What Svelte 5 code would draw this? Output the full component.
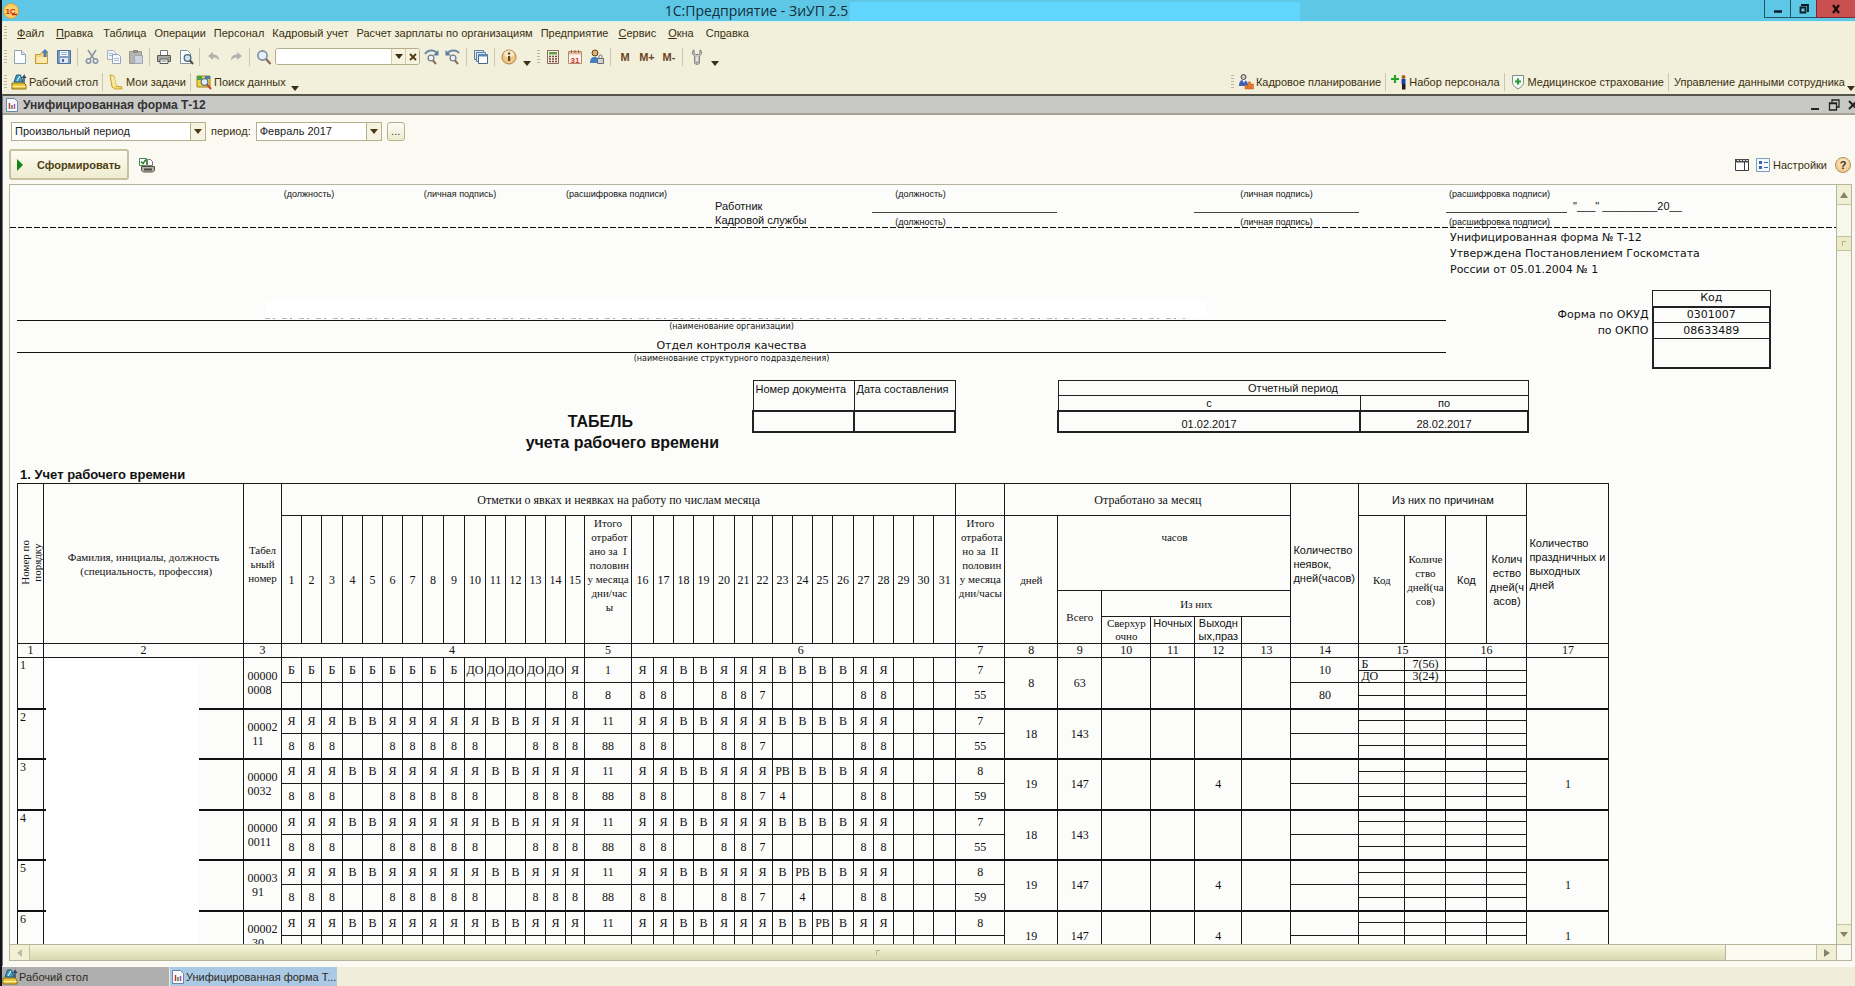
<script>
  const menu = [
    ['Ф', 'айл'], ['П', 'равка'], ['', 'Таблица'], ['', 'Операции'], ['', 'Персонал'],
    ['', 'Кадровый учет'], ['', 'Расчет зарплаты по организациям'], ['', 'Предприятие'],
    ['С', 'ервис'], ['О', 'кна'], ['', 'Сп', 'р', 'авка']
  ];

  const tools = [
    ['new', 'Новый'], ['open', 'Открыть'], ['save', 'Сохранить'], null,
    ['cut', 'Вырезать'], ['copy', 'Копировать'], ['paste', 'Вставить'], null,
    ['print', 'Печать'], ['preview', 'Просмотр'], null,
    ['undo', 'Отменить'], ['redo', 'Вернуть'], null,
    ['find', 'Найти']
  ];

  const firstDays = Array.from({ length: 15 }, (_, i) => i + 1);
  const secondDays = Array.from({ length: 16 }, (_, i) => i + 16);

  const cols = [
    26, 200, 38,
    20, 20, 21, 20, 20, 20, 20, 21, 21, 21, 20, 20, 20, 20, 19,
    47, 22, 20, 20, 20, 21, 18, 20, 20, 20, 20, 21, 20, 20, 20, 20, 22, 49,
    53, 44, 49, 44, 47, 49, 68, 46, 41, 41, 40, 82
  ];

  const usual = 'Я Я Я В В Я Я Я Я Я В В Я Я Я'.split(' ');
  const sick = 'Б Б Б Б Б Б Б Б Б ДО ДО ДО ДО ДО Я'.split(' ');

  function secondHalf(extra) {
    const codes = 'Я Я В В Я Я Я В В В В Я Я'.split(' ').concat(['', '', '']);
    const hours = ['8', '8', '', '', '8', '8', '7', '', '', '', '', '8', '8', '', '', ''];
    if (extra) {
      codes[extra - 16] = 'РВ';
      hours[extra - 16] = '4';
    }
    return { codes, hours };
  }

  function person(n, id, extra, isSick = false) {
    const first = isSick ? sick : usual;
    return {
      n, id, first,
      firstHours: first.map((c) => (c === 'Я' ? '8' : '')),
      t1: isSick ? ['1', '8'] : ['11', '88'],
      second: secondHalf(extra),
      t2: extra ? ['8', '59'] : ['7', '55'],
      days: isSick ? '8' : extra ? '19' : '18',
      total: isSick ? '63' : extra ? '147' : '143',
      holiday: extra ? '4' : '',
      holidays: extra ? '1' : '',
      absence: isSick ? ['10', '80'] : ['', ''],
      reasons: isSick ? [['Б', '7(56)'], ['ДО', '3(24)'], ['', ''], ['', '']] : [['', ''], ['', ''], ['', ''], ['', '']]
    };
  }

  const people = [
    person(1, '00000\n0008  ', 0, true),
    person(2, '00002\n11   ', 0),
    person(3, '00000\n0032  ', 23),
    person(4, '00000\n0011  ', 0),
    person(5, '00003\n91   ', 24),
    person(6, '00002\n30   ', 25)
  ];

  let period = $state('Произвольный период');
  let month = $state('Февраль 2017');
  let query = $state('');
</script>

{#snippet icon(name)}
  <svg class="ico" viewBox="0 0 16 16" width="16" height="16" aria-hidden="true">
    {#if name === 'new'}
      <path d="M2.5 1.5h7l4 4v9h-11z" fill="#fdfeff" stroke="#8fa3b5" />
      <path d="M9.500 1.500v4h4" fill="#d8e6f2" stroke="#8fa3b5" />
    {:else if name === 'open'}
      <path d="M1.500 5.500h5l1-2h6v11h-12z" fill="#f6d77c" stroke="#c29a3c" />
      <path d="M3 8h10v6H3z" fill="#fbe9ae" />
      <path d="M11 0l3.500 3.500h-2V8h-3V3.500h-2z" fill="#4f7fb5" />
    {:else if name === 'save'}
      <path d="M1.500 1.500h13v13h-13z" fill="#7e9cc4" stroke="#4e6c96" />
      <path d="M4 2h8v5H4z" fill="#f2f7fc" />
      <path d="M5 3.500h6M5 5.500h6" stroke="#9db3cd" />
      <path d="M4 9h8v5H4z" fill="#dfe7f0" />
      <path d="M6 10h2v3H6z" fill="#4e6c96" />
    {:else if name === 'cut'}
      <path d="M4 1l6 9M12 1L6 10" stroke="#8b95a3" stroke-width="1.600" fill="none" />
      <circle cx="4.500" cy="12" r="2.200" fill="none" stroke="#8593ab" stroke-width="1.500" />
      <circle cx="11.500" cy="12" r="2.200" fill="none" stroke="#8593ab" stroke-width="1.500" />
    {:else if name === 'copy'}
      <path d="M1.500 1.500h6l2 2v7h-8z" fill="#eef3f8" stroke="#a3b2c4" />
      <path d="M6.500 5.500h6l2 2v7h-8z" fill="#f6f9fc" stroke="#93a5bb" />
      <path d="M8 9.500h5M8 11.500h5M3 4.500h4M3 6.500h3" stroke="#a9bbd0" />
    {:else if name === 'paste'}
      <path d="M1.500 2.500h12v12h-12z" fill="#b6b6b0" stroke="#97978f" />
      <path d="M5 1h5v3H5z" fill="#8f8f8a" />
      <path d="M6.500 6.500h8v8h-8z" fill="#cdd3da" stroke="#9ea8b4" />
    {:else if name === 'print'}
      <path d="M4.500 1.500h7v5h-7z" fill="#fff" stroke="#77777a" />
      <path d="M1.500 6.500h13v6h-13z" fill="#a9a9a6" stroke="#5b5b59" />
      <path d="M4 10h8v4.500H4z" fill="#f4f4ef" stroke="#5b5b59" />
      <path d="M5.500 12h5" stroke="#888" />
      <path d="M12 8h1.500v1H12z" fill="#4fa13c" />
    {:else if name === 'preview'}
      <path d="M2.500 1.500h7l3 3v10h-10z" fill="#fdfeff" stroke="#7f93a8" />
      <circle cx="9.500" cy="9" r="3.300" fill="#cfe3f3" stroke="#4f6478" stroke-width="1.300" />
      <path d="M12 11.500l3 3.500" stroke="#5a4a3a" stroke-width="2" />
    {:else if name === 'undo'}
      <path d="M2 7l5-4v2.500c4 0 6 2 6 6-1.500-2-3-3-6-3V11z" fill="#b0b3ac" />
    {:else if name === 'redo'}
      <path d="M14 7L9 3v2.500c-4 0-6 2-6 6 1.500-2 3-3 6-3V11z" fill="#b0b3ac" />
    {:else if name === 'find'}
      <circle cx="6.500" cy="6.500" r="4.600" fill="#e4f0fa" stroke="#7d8da0" stroke-width="1.600" />
      <path d="M10 10l4.500 5" stroke="#8b6f5a" stroke-width="2.400" />
    {:else if name === 'findnext' || name === 'findprev'}
      <path d="M2 5c2-4 9-5 12-1" fill="none" stroke="#6c8ca6" stroke-width="2" />
      <path d={name === 'findnext' ? 'M15.500 1v5.500H10z' : 'M.5 1v5.500H6z'} fill="#5c7e9b" />
      <circle cx="8" cy="9" r="2.900" fill="#eaf3fa" stroke="#7a7f88" stroke-width="1.300" />
      <path d="M10 11.500l3 3.500" stroke="#8b6f5a" stroke-width="2" />
    {:else if name === 'windows'}
      <path d="M1.500 1.500h9v9h-9z" fill="#dfe9f3" stroke="#5a7fa5" />
      <path d="M3.500 3.500h9v9h-9z" fill="#dfe9f3" stroke="#5a7fa5" />
      <path d="M5.500 5.500h9v9h-9z" fill="#fff" stroke="#43678d" />
      <path d="M5 5h10v2.500H5z" fill="#5a87b5" />
    {:else if name === 'info'}
      <circle cx="8" cy="8" r="7" fill="#f1c887" stroke="#a98246" />
      <ellipse cx="8" cy="5" rx="5" ry="3.500" fill="#fbe8c6" />
      <path d="M7 7h2.200v5H7zM7 3.500h2.200v2H7z" fill="#5a4722" />
    {:else if name === 'calc'}
      <path d="M2.500 1.500h11v13h-11z" fill="#f4efe0" stroke="#8b6b58" />
      <path d="M4 3h8v2.500H4z" fill="#5fa047" />
      <path d="M4 7.500h2M7 7.500h2M10 7.500h2M4 10h2M7 10h2M10 10h2M4 12.500h2M7 12.500h2M10 12.500h2" stroke="#7a4a3a" stroke-width="1.400" />
    {:else if name === 'calendar'}
      <path d="M1.500 2.500h13v12h-13z" fill="#fff4ea" stroke="#b98671" />
      <path d="M2 3h12v2.500H2z" fill="#e8b9a2" />
      <path d="M4.500 1v3M8 1v3M11.500 1v3" stroke="#8d6a58" />
      <text x="8" y="13.500" text-anchor="middle" class="day31">31</text>
    {:else if name === 'userlock'}
      <circle cx="6" cy="4" r="3" fill="#e0b070" stroke="#5f4020" />
      <path d="M1 14c0-5 2-6 5-6s4 2 4 6z" fill="#3f7fc4" />
      <path d="M8.500 9.500h6v5h-6z" fill="#cfd3d8" stroke="#666c74" />
      <path d="M10 9V7.500a1.500 1.500 0 013 0V9" fill="none" stroke="#666c74" />
    {:else if name === 'wrench'}
      <path d="M5 .8C2.800 2 2.800 5.500 5.600 7v7c0 1.800 4.800 1.800 4.800 0V7c2.800-1.500 2.800-5 .6-6.200v3.400L9.500 5.500h-3L5 4.200z" fill="#cbcbc8" stroke="#7c7c78" />
      <path d="M8 8v5" stroke="#fff" />
      <circle cx="8" cy="13.200" r=".8" fill="#6c6c68" />
    {:else if name === 'desk'}
      <path d="M3 8L5.500 1h4L12 8z" fill="#3e9dc0" stroke="#22566e" />
      <path d="M6 7l3-5" stroke="#fff" />
      <path d="M13 12V2l-1.500 2M13 2l2 2" stroke="#27466e" stroke-width="1.400" fill="none" />
      <path d="M1 9h12l2 2v4H1z" fill="#ecc63f" stroke="#8d6f12" />
      <path d="M1.500 12.500h13" stroke="#fff1a0" />
    {:else if name === 'note'}
      <path d="M2 1l4 1 2 10 6 1v2H7L4 13z" fill="#f4d568" stroke="#c9a537" />
      <path d="M3 2l3 .500 2 9.500-3 .500z" fill="#fbeba0" />
    {:else if name === 'search'}
      <path d="M1 2h13v11H1z" fill="#f6d33a" stroke="#9c8320" />
      <path d="M1 2h5v4H1z" fill="#4aa04a" />
      <path d="M9 2h5v3H9z" fill="#3d78c0" />
      <circle cx="8.500" cy="8" r="3.300" fill="#e2f1fb" stroke="#5d7a90" stroke-width="1.300" />
      <path d="M11 10.500l4 4.500" stroke="#c24b2c" stroke-width="2" />
    {:else if name === 'plan'}
      <circle cx="5.500" cy="3" r="2.500" fill="#e8c49a" stroke="#37497f" />
      <path d="M1 12c0-5 2-6 4.500-6S10 8 10 12z" fill="#3c62b8" />
      <path d="M4.500 6L6 9l1.500-3z" fill="#fff" />
      <path d="M7 15V11h2.500v4zM10 15V8h2.500v7zM13 15V10h2.500v5z" fill="#f0812c" stroke="#b84e12" stroke-width=".500" />
    {:else if name === 'hire'}
      <path d="M4 1v8M0 5h8" stroke="#25a325" stroke-width="2.200" />
      <circle cx="12.500" cy="3" r="2" fill="#a3622a" />
      <path d="M10.500 5h4v5h-4z" fill="#1c3fb2" />
      <path d="M11 10h3.500v5.500H11z" fill="#2c1a14" />
    {:else if name === 'shield'}
      <path d="M2.500 1.500h11v7c0 3-3 5-5.500 6.500C5.500 13.500 2.500 11.500 2.500 8.500z" fill="#f6faf4" stroke="#7f8f8a" />
      <path d="M8 4.500v6M5 7.500h6" stroke="#2c9a3a" stroke-width="2.200" />
    {:else if name === 'report'}
      <path d="M2.500 1.500h8l3 3v10h-11z" fill="#f6fafd" stroke="#6b87a3" />
      <path d="M5.500 12V6" stroke="#c0392b" stroke-width="1.500" />
      <path d="M8 12V8" stroke="#4a8a3a" stroke-width="1.500" />
      <path d="M10.500 12V7" stroke="#b04ab0" stroke-width="1.500" />
    {:else if name === 'printcheck'}
      <path d="M.5 1.500h7v7h-7z" fill="#fff" stroke="#4e8a4e" />
      <path d="M2 4.500l2 2 3-4" stroke="#1f8a2a" stroke-width="1.500" fill="none" />
      <path d="M8.500 2.500h3l2 2v4h-5z" fill="#fff" stroke="#777" />
      <path d="M2.500 9.500h13v4l-2 1.500h-9l-2-1.500z" fill="#b5b3a8" stroke="#55544c" />
      <path d="M5 11.500h8v2H5z" fill="#49483f" />
    {:else if name === 'columns'}
      <path d="M1.500 2.500h13v11h-13z" fill="#fff" stroke="#3d3d3d" />
      <path d="M1 2h14v3.500H1z" fill="#4b4b4b" />
      <path d="M3 3.500h2M6 3.500h2M9 3.500h2M12 3.500h2" stroke="#ddd" />
      <path d="M10.500 5v8" stroke="#3d3d3d" />
    {:else if name === 'list'}
      <path d="M1.500 1.500h13v13h-13z" fill="#f3f8fd" stroke="#7b9cc4" />
      <path d="M4 4h3v3H4zM4 9h3v3H4z" fill="#3a69a8" />
      <path d="M9 5.500h4M9 10.500h4" stroke="#3a69a8" />
    {/if}
  </svg>
{/snippet}

{#snippet tool(name, label)}
  <button class="tool" aria-label={label}>{@render icon(name)}</button>
{/snippet}

<div class="window">
  <header class="titlebar">
    <svg class="logo" viewBox="0 0 16 16" width="16" height="16" aria-hidden="true">
      <circle cx="8" cy="8" r="7.500" fill="#f9d36a" stroke="#d99a3a" />
      <text x="7.500" y="11" text-anchor="middle" class="logo-text">1С</text>
      <path d="M9 11.500h5" stroke="#c8281c" stroke-width="1.500" />
    </svg>
    <h1>1С:Предприятие - ЗиУП 2.5</h1>
    <span class="veil"></span>
    <div class="winbtns">
      <button aria-label="Свернуть"><svg viewBox="0 0 10 10" width="10" height="10"><path d="M1 7.500h8" stroke="#0b1c24" stroke-width="2.500" /></svg></button>
      <button aria-label="Восстановить"><svg viewBox="0 0 10 10" width="10" height="10"><path d="M3 2V1h6v6H8M1.500 3.500h5v5h-5z" fill="none" stroke="#0b1c24" stroke-width="1.800" /></svg></button>
      <button class="close" aria-label="Закрыть"><svg viewBox="0 0 10 10" width="10" height="10"><path d="M2 1l6 8M8 1L2 9" stroke="#1b0b0b" stroke-width="2.200" /></svg></button>
    </div>
  </header>

  <nav class="bar menu">
    <span class="grip"></span>
    {#each menu as m}
      <button class:key={m[0] || m[2]}><u>{m[0]}</u>{m[1]}{#if m[2]}<u>{m[2]}</u>{m[3]}{/if}</button>
    {/each}
  </nav>

  <div class="bar tools">
    <span class="grip"></span>
    {#each tools as t}
      {#if t}{@render tool(t[0], t[1])}{:else}<span class="sep"></span>{/if}
    {/each}
    <div class="combo">
      <input aria-label="Поиск" bind:value={query} />
      <button aria-label="Список"><span class="tri"></span></button>
      <button aria-label="Очистить"><svg viewBox="0 0 8 8" width="8" height="8"><path d="M1 1l6 6M7 1L1 7" stroke="#4a3b12" stroke-width="1.800" /></svg></button>
    </div>
    {@render tool('findnext', 'Найти следующий')}
    {@render tool('findprev', 'Найти предыдущий')}
    <span class="sep"></span>
    {@render tool('windows', 'Окна')}
    <span class="sep"></span>
    {@render tool('info', 'О программе')}
    <button class="more" aria-label="Еще"><span class="tri"></span></button>
    <span class="grip mid"></span>
    {@render tool('calc', 'Калькулятор')}
    {@render tool('calendar', 'Календарь')}
    {@render tool('userlock', 'Пользователи')}
    <span class="sep"></span>
    <button class="tool mem">M</button>
    <button class="tool mem">M+</button>
    <button class="tool mem">M-</button>
    <span class="sep"></span>
    {@render tool('wrench', 'Настройка')}
    <button class="more" aria-label="Еще"><span class="tri"></span></button>
  </div>

  <div class="bar panels">
    <span class="grip"></span>
    <button class="panel">{@render icon('desk')}Рабочий стол</button>
    <span class="sep"></span>
    <button class="panel">{@render icon('note')}Мои задачи</button>
    <span class="sep"></span>
    <button class="panel">{@render icon('search')}Поиск данных</button>
    <button class="more" aria-label="Еще"><span class="tri"></span></button>
    <span class="grow"></span>
    <span class="grip"></span>
    <button class="panel">{@render icon('plan')}Кадровое планирование</button>
    <span class="sep"></span>
    <button class="panel">{@render icon('hire')}Набор персонала</button>
    <span class="sep"></span>
    <button class="panel">{@render icon('shield')}Медицинское страхование</button>
    <span class="sep"></span>
    <button class="panel">Управление данными сотрудника</button>
    <button class="more edge" aria-label="Еще"><span class="tri"></span></button>
  </div>

  <main class="mdi">
    <div class="caption">
      {@render icon('report')}
      <h2>Унифицированная форма Т-12</h2>
      <div class="mdibtns">
        <button aria-label="Свернуть"><svg viewBox="0 0 12 12" width="12" height="12"><path d="M2 10h8" stroke="#222" stroke-width="2" /></svg></button>
        <button aria-label="Восстановить"><svg viewBox="0 0 12 12" width="12" height="12"><path d="M4 3V1h7v7H9M1.500 4h7v7h-7zM1 4.500h8" fill="none" stroke="#222" stroke-width="1.300" /></svg></button>
        <button aria-label="Закрыть"><svg viewBox="0 0 12 12" width="12" height="12"><path d="M2 2l8 8M10 2l-8 8" stroke="#222" stroke-width="2" /></svg></button>
      </div>
    </div>

    <div class="filters">
      <span class="select wide">
        <select aria-label="Вид периода" bind:value={period}>
          <option>Произвольный период</option>
        </select>
      </span>
      <label for="month">период:</label>
      <span class="select">
        <select id="month" bind:value={month}>
          <option>Февраль 2017</option>
        </select>
      </span>
      <button class="dots">...</button>
    </div>

    <div class="actions">
      <button class="run"><span class="play"></span>Сформировать</button>
      <button class="tool" aria-label="Печать">{@render icon('printcheck')}</button>
      <span class="grow"></span>
      <button class="tool" aria-label="Колонки">{@render icon('columns')}</button>
      <button class="panel">{@render icon('list')}Настройки</button>
      <button class="help">?</button>
    </div>

    <section class="viewer">
      <div class="sheet">
        <div class="signs">
          <span class="s1">(должность)</span>
          <span class="s3">(личная подпись)</span>
          <span class="s4">(расшифровка подписи)</span>
          <span class="s6 post">(должность)</span>
          <span class="s8">(личная подпись)</span>
          <span class="s10 name">(расшифровка подписи)</span>
        </div>
        <div class="signs lines">
          <span class="s5 who">Работник</span>
          <span class="s6 line"></span>
          <span class="s8 line"></span>
          <span class="s10 line"></span>
          <span class="s11 date">"___" _________20__</span>
        </div>
        <div class="signs">
          <span class="s5 who">Кадровой службы</span>
          <span class="s6 post">(должность)</span>
          <span class="s8">(личная подпись)</span>
          <span class="s10 name">(расшифровка подписи)</span>
        </div>
        <div class="cutline"></div>

        <div class="head">
          <div class="org">
            <div class="blank"></div>
            <small>(наименование организации)</small>
            <p>Отдел контроля качества</p>
            <small>(наименование структурного подразделения)</small>
          </div>
          <div class="legal">
            <p>Унифицированная форма № Т-12</p>
            <p>Утверждена Постановлением Госкомстата</p>
            <p>России от 05.01.2004 № 1</p>
            <table class="codes">
              <tbody>
                <tr class="c1"><th></th><td>Код</td></tr>
                <tr class="c2"><th>Форма по ОКУД</th><td>0301007</td></tr>
                <tr class="c3"><th>по ОКПО</th><td>08633489</td></tr>
                <tr class="c4"><th></th><td></td></tr>
              </tbody>
            </table>
          </div>
        </div>

        <div class="titleblock">
          <h3><span class="t1">ТАБЕЛЬ</span><span>учета рабочего времени</span></h3>
          <table class="boxes doc">
            <tbody>
              <tr class="tall"><td>Номер документа</td><td>Дата составления</td></tr>
              <tr class="strong"><td></td><td></td></tr>
            </tbody>
          </table>
          <table class="boxes span">
            <colgroup><col class="from" /><col class="to" /></colgroup>
            <tbody>
              <tr><td colspan="2">Отчетный период</td></tr>
              <tr><td>с</td><td>по</td></tr>
              <tr class="strong"><td>01.02.2017</td><td>28.02.2017</td></tr>
            </tbody>
          </table>
        </div>

        <h4>1. Учет рабочего времени</h4>
        <div class="gridwrap">
          <table class="grid">
            <colgroup>
              {#each cols as w}<col style="width:{w}px" />{/each}
            </colgroup>
            <thead>
              <tr class="h1">
                <th rowspan="4"><span class="vert">Номер по{'\n'}порядку</span></th>
                <th rowspan="4" class="small">Фамилия, инициалы, должность{'\n'}  (специальность, профессия)</th>
                <th rowspan="4" class="small">Табел{'\n'}ьный{'\n'}номер</th>
                <th colspan="32">Отметки о явках и неявках на работу по числам месяца</th>
                <th></th>
                <th colspan="6">Отработано за месяц</th>
                <th rowspan="4" class="sans left">Количество{'\n'}неявок,{'\n'}дней(часов)</th>
                <th colspan="4" class="sans">Из них по причинам</th>
                <th rowspan="4" class="sans left">Количество{'\n'}праздничных и{'\n'}выходных{'\n'}дней</th>
              </tr>
              <tr class="h2">
                {#each firstDays as d}<th rowspan="3">{d}</th>{/each}
                <th rowspan="3" class="small top">Итого{'\n'} отработ{'\n'}ано за  I{'\n'} половин{'\n'}у месяца{'\n'} дни/час{'\n'} ы</th>
                {#each secondDays as d}<th rowspan="3">{d}</th>{/each}
                <th rowspan="3" class="small top">Итого{'\n'} отработа{'\n'}но за  II{'\n'} половин{'\n'}у месяца{'\n'}дни/часы</th>
                <th rowspan="3" class="small">дней</th>
                <th colspan="5" class="small top hours">часов</th>
                <th rowspan="3" class="small">Код</th>
                <th rowspan="3" class="small">Количе{'\n'}ство{'\n'}дней(ча{'\n'}сов)</th>
                <th rowspan="3" class="sans">Код</th>
                <th rowspan="3" class="sans">Колич{'\n'}ество{'\n'}дней(ч{'\n'}асов)</th>
              </tr>
              <tr class="h3">
                <th rowspan="2" class="small">Всего</th>
                <th colspan="4" class="small">Из них</th>
              </tr>
              <tr class="h4">
                <th class="small">Сверхур{'\n'}очно</th>
                <th class="sans top">Ночных</th>
                <th class="sans">Выходн{'\n'}ых,праз</th>
                <th></th>
              </tr>
              <tr class="h5">
                <th>1</th><th>2</th><th>3</th><th colspan="15" class="n4">4</th><th>5</th><th colspan="16" class="n6">6</th>
                <th>7</th><th>8</th><th>9</th><th>10</th><th>11</th><th>12</th><th>13</th><th>14</th>
                <th colspan="2">15</th><th colspan="2">16</th><th>17</th>
              </tr>
            </thead>
            {#each people as p}
              <tbody>
                {#each p.reasons as r, i}
                  <tr>
                    {#if i === 0}
                      <td rowspan="4" class="num">{p.n}</td>
                      <td rowspan="4"></td>
                      <td rowspan="4">{p.id}</td>
                    {/if}
                    {#if i === 0}
                      {#each p.first as c}<td rowspan="2">{c}</td>{/each}
                      <td rowspan="2">{p.t1[0]}</td>
                      {#each p.second.codes as c}<td rowspan="2">{c}</td>{/each}
                      <td rowspan="2">{p.t2[0]}</td>
                      <td rowspan="4">{p.days}</td>
                      <td rowspan="4">{p.total}</td>
                      <td rowspan="4"></td>
                      <td rowspan="4"></td>
                      <td rowspan="4">{p.holiday}</td>
                      <td rowspan="4"></td>
                      <td rowspan="2">{p.absence[0]}</td>
                    {:else if i === 2}
                      {#each p.firstHours as c}<td rowspan="2">{c}</td>{/each}
                      <td rowspan="2">{p.t1[1]}</td>
                      {#each p.second.hours as c}<td rowspan="2">{c}</td>{/each}
                      <td rowspan="2">{p.t2[1]}</td>
                      <td rowspan="2">{p.absence[1]}</td>
                    {/if}
                    <td class="reason code">{r[0]}</td>
                    <td class="reason">{r[1]}</td>
                    <td></td>
                    <td></td>
                    {#if i === 0}<td rowspan="4">{p.holidays}</td>{/if}
                  </tr>
                {/each}
              </tbody>
            {/each}
          </table>
          <div class="mask"></div>
        </div>
      </div>

      <div class="vscroll">
        <button aria-label="Вверх"><span class="tri up"></span></button>
        <span class="vthumb"><i class="mark"></i></span>
        <span class="grow"></span>
        <button aria-label="Вниз"><span class="tri"></span></button>
      </div>
      <div class="hscroll">
        <button aria-label="Влево"><span class="tri lt"></span></button>
        <span class="hthumb"><i class="mark"></i></span>
        <span class="htrack"></span>
        <button aria-label="Вправо"><span class="tri rt"></span></button>
      </div>
      <div class="corner"></div>
    </section>
  </main>

  <footer class="tabs">
    <button>{@render icon('desk')}Рабочий стол</button>
    <button class="on">{@render icon('report')}Унифицированная форма Т...</button>
  </footer>
</div>

<style>
  :global(body) { margin: 0; background: #f2f0da; }
  .window {
    box-sizing: border-box;
    height: 100vh;
    display: flex;
    flex-direction: column;
    overflow: hidden;
    border-left: 2px solid #14141c;
    background: #f2f0da;
    color: #3b2f10;
    font: 11px/14px "Liberation Sans", Arial, sans-serif;
  }
  button, input, select { font: inherit; color: inherit; margin: 0; }
  button { padding: 0; border: 0; background: none; white-space: nowrap; }
  h1, h2, h3, h4, p { margin: 0; }
  .grow { flex: 1; }
  .ico { display: block; flex: none; }

  .titlebar {
    height: 22px;
    flex: none;
    display: grid;
    grid-template-columns: 1fr auto 1fr;
    align-items: center;
    position: relative;
    background: #5fc7e6;
    border-bottom: 1px solid #d9f0ee;
    box-sizing: border-box;
  }
  .logo { margin-left: 1px; }
  .logo-text { font: bold 8px "Liberation Sans", Arial, sans-serif; fill: #c8281c; }
  h1 {
    font: 14px/20px "Open Sans", "Noto Sans", sans-serif;
    color: #12303c;
    grid-column: 2;
    padding-right: 344px;
  }
  .veil { position: absolute; left: 848px; top: 2px; bottom: 0; width: 450px; background: #62d5fc; }
  .winbtns { display: flex; justify-self: end; align-self: start; height: 18px; }
  .winbtns button {
    width: 26px;
    display: grid;
    place-items: center;
    border: 1px solid #1f5568;
    border-top: 0;
    border-right: 0;
  }
  .winbtns .close { width: 39px; background: #c8504f; border-color: #7a2a2e; }

  .bar { flex: none; display: flex; align-items: center; position: relative; }
  .grip {
    width: 3px;
    height: 14px;
    margin: 0 2px;
    background: repeating-linear-gradient(#b9b79c 0 1px, transparent 1px 3px);
  }
  .grip.mid { margin: 0 2px 0 3px; }
  .sep { flex: none; width: 1px; height: 18px; margin: 0 3px 0 2px; background: #c9c7ad; }
  .tri { display: block; width: 0; height: 0; border: 4px solid transparent; border-top: 5px solid #3a2f12; border-bottom: 0; }
  .menu { height: 22px; gap: 4px; }
  .menu button { padding: 0 2px; }
  .menu .key { padding: 0 4px; }
  .tools { height: 25px; }
  .tool { flex: none; width: 22px; height: 22px; display: grid; place-items: center; }
  .mem { font-weight: bold; color: #6b4423; }
  .day31 { font: bold 8px "Liberation Sans", Arial, sans-serif; fill: #d0342c; }
  .more { width: 14px; height: 18px; display: grid; place-items: end center; }
  .combo {
    display: flex;
    width: 145px;
    height: 17px;
    box-sizing: border-box;
    border: 1px solid #b3ae87;
    border-radius: 3px;
    background: #fff;
    overflow: hidden;
  }
  .combo input { flex: 1; min-width: 0; border: 0; padding: 0 3px; background: #fff; outline: 0; }
  .combo button { width: 14px; display: grid; place-items: center; border-left: 1px solid #d3cfac; background: #f6f4e0; }
  .panels { height: 25px; }
  .panel { display: flex; align-items: center; gap: 2px; height: 20px; padding: 0 2px; }
  .more.edge { width: 8px; }

  .mdi {
    flex: 1;
    min-height: 0;
    display: flex;
    flex-direction: column;
    border-top: 2px solid #55554a;
    border-left: 1px solid #77777a;
    background: #fafaf3;
  }
  .caption {
    flex: none;
    display: flex;
    align-items: center;
    gap: 3px;
    height: 17px;
    padding-left: 1px;
    background: #c8c8c6;
    border-bottom: 2px solid #a3a396;
    overflow: hidden;
  }
  h2 { flex: 1; font-size: 12px; line-height: 16px; color: #333; }
  .mdibtns { display: flex; gap: 7px; margin-right: -4px; }
  .mdibtns svg { display: block; }
  .filters { flex: none; display: flex; align-items: center; gap: 5px; padding: 6px 0 0 8px; height: 20px; }
  .select { position: relative; display: block; width: 126px; height: 19px; }
  .select.wide { width: 195px; }
  .select select {
    appearance: none;
    box-sizing: border-box;
    width: 100%;
    height: 19px;
    padding: 0 18px 0 3px;
    border: 1px solid #b5b08c;
    border-radius: 0;
    background: #fff;
    color: #1c1c1c;
    display: block;
  }
  .select::before {
    content: "";
    position: absolute;
    right: 1px;
    top: 1px;
    bottom: 1px;
    width: 14px;
    background: #f6f4e0;
    border-left: 1px solid #b5b08c;
    pointer-events: none;
  }
  .select::after {
    content: "";
    position: absolute;
    right: 4px;
    top: 7px;
    border: 4px solid transparent;
    border-top: 5px solid #4a3b12;
    border-bottom: 0;
    pointer-events: none;
  }
  .dots {
    width: 18px;
    height: 19px;
    border: 1px solid #b5b08c;
    border-radius: 3px;
    background: linear-gradient(#fdfdf5, #eeebd0);
  }
  .actions { flex: none; display: flex; align-items: center; padding: 8px 4px 4px 6px; height: 31px; }
  .actions .tool { margin-left: 7px; }
  .run {
    display: flex;
    align-items: center;
    gap: 14px;
    height: 31px;
    padding: 0 6px;
    border: 2px solid #c6c2a0;
    border-radius: 3px;
    background: linear-gradient(#fdfcf0, #efecd0);
    box-sizing: border-box;
    font-weight: bold;
    color: #4e3f12;
  }
  .play { border: 6px solid transparent; border-left: 6px solid #11851c; border-right: 0; }
  .help {
    width: 16px;
    height: 16px;
    margin-left: 6px;
    border: 1px solid #b08d55;
    border-radius: 50%;
    background: radial-gradient(circle at 50% 30%, #fdeccb, #eebf78);
    font-weight: bold;
    line-height: 14px;
    text-align: center;
  }

  .viewer {
    flex: 1;
    min-height: 0;
    margin: 0 3px 5px 6px;
    display: grid;
    grid-template: 1fr 16px / 1fr 15px;
    border: 1px solid #b5b49c;
  }
  .sheet { overflow: hidden; padding: 0 0 0 7px; background: #fcfdfb; color: #111; min-width: 0; min-height: 0; }
  .signs {
    display: grid;
    grid-template-columns: 247px 90px 46px 120px 193px 159px 185px 137px 165px 87px 121px auto;
    height: 14px;
    font-size: 9px;
    line-height: 18px;
    text-align: center;
    white-space: nowrap;
  }
  .s1 { grid-column: 2; }
  .s3 { grid-column: 4; }
  .s4 { grid-column: 5; }
  .s5 { grid-column: 6; }
  .s6 { grid-column: 7; }
  .s8 { grid-column: 9; }
  .s10 { grid-column: 11; }
  .s11 { grid-column: 12; }
  .post { padding-right: 88px; }
  .name { text-align: left; padding-left: 3px; }
  .who, .date { font-size: 11px; line-height: 14px; text-align: left; padding-left: 2px; }
  .date { padding-left: 6px; }
  .lines .line { border-bottom: 1px solid #444; }
  .cutline { height: 1px; margin-left: -7px; background: repeating-linear-gradient(90deg, #111 0 6px, transparent 6px 8px); }

  .head {
    display: grid;
    grid-template-columns: 1429px auto;
    font-family: "DejaVu Sans", Verdana, sans-serif;
    height: 139px;
    margin-top: 2px;
  }
  .org { text-align: center; padding-top: 70px; }
  .org small { display: block; font-size: 8px; line-height: 11px; }
  .org .blank {
    height: 20px;
    border-bottom: 1px solid #111;
    background:
      repeating-linear-gradient(90deg, #b9bab8 0 5px, transparent 5px 8px, #a9aaa8 8px 10px, transparent 10px 17px) 248px 18px / 920px 1px no-repeat,
      linear-gradient(#fff, #fff) 248px 0 / 942px 18px no-repeat;
  }
  .org p { padding-top: 7px; line-height: 13px; border-bottom: 1px solid #111; }
  .legal p { line-height: 16px; padding-left: 4px; white-space: nowrap; }
  .codes { border-collapse: collapse; width: 325px; margin-top: 12px; table-layout: fixed; }
  .codes th { width: 203px; font-weight: normal; text-align: right; padding: 0 3px 0 0; }
  .codes td { border: 1px solid #222; text-align: center; padding: 0; }
  .codes .c2 td { border-top-width: 2px; }
  .codes .c2 td, .codes .c3 td, .codes .c4 td { border-left-width: 2px; border-right-width: 2px; }
  .codes .c4 td { border-bottom-width: 2px; }
  .c1, .c2 { height: 16px; }
  .c3 { height: 16px; }
  .c4 { height: 29px; }

  .titleblock { display: flex; align-items: flex-start; margin-top: 11px; }
  h3 { width: 702px; padding: 31px 33px 0 0; text-align: right; font-size: 16px; line-height: 21px; }
  h3 span { display: block; }
  h3 .t1 { padding-right: 86px; }
  .boxes { border-collapse: collapse; table-layout: fixed; }
  .boxes td { border: 1px solid #222; text-align: center; padding: 0; }
  .boxes tr { height: 15px; }
  .boxes .tall { height: 30px; }
  .boxes .tall td { vertical-align: top; text-align: left; padding: 1px 0 0 2px; white-space: nowrap; }
  .boxes .strong { height: 21px; }
  .boxes .strong td { border-width: 2px; padding-top: 6px; line-height: 13px; }
  .doc { width: 204px; }
  .span { width: 470px; margin-left: 101px; }
  .from { width: 302px; }
  .to { width: 168px; }

  h4 { margin-top: 14px; padding-left: 3px; font-size: 13px; line-height: 16px; }
  .gridwrap { position: relative; width: max-content; }
  .mask { position: absolute; left: 29px; top: 178px; width: 153px; height: 284px; background: #fff; }
  .grid {
    border-collapse: collapse;
    table-layout: fixed;
    width: 1591px;
    font: 12px/14px "Liberation Serif", "Times New Roman", serif;
    text-align: center;
    white-space: pre;
  }
  .grid th { font-weight: normal; }
  .grid th, .grid td { border: 1px solid #1a1a1a; padding: 0; }
  .grid .small { font-size: 11px; }
  .grid .sans { font: 11px/14px "Liberation Sans", Arial, sans-serif; }
  .grid .left { text-align: left; padding-left: 2px; }
  .grid .top { vertical-align: top; }
  .grid .hours { padding-top: 14px; }
  .grid .n4 { padding-left: 38px; }
  .grid .n6 { padding-left: 14px; }
  .vert { display: inline-block; writing-mode: vertical-rl; transform: rotate(180deg); line-height: 12px; font-size: 11px; }
  .h1 { height: 32px; }
  .h2 { height: 75px; }
  .h3 { height: 26px; }
  .h4 { height: 27px; }
  .grid .h4 th { line-height: 13px; }
  .h5 { height: 14px; }
  .grid .h5 th { line-height: 13px; }
  .grid tbody tr { height: 13px; }
  .grid tbody tr:nth-child(2) { height: 12px; }
  .grid tbody:nth-of-type(even) tr:nth-child(1) { height: 12px; }
  .grid tbody:nth-of-type(even) tr:nth-child(2) { height: 13px; }
  .grid tbody:nth-of-type(even) tr:nth-child(3) { height: 12px; }
  .grid tbody + tbody { border-top: 2px solid #111; }
  .grid .num { vertical-align: top; text-align: left; padding-left: 2px; }
  .grid .reason { line-height: 11px; }
  .grid .code { text-align: left; padding-left: 2px; }

  .vscroll { display: flex; flex-direction: column; border-left: 1px solid #b5b49c; background: #f8f8ea; }
  .vscroll button { height: 20px; display: grid; place-items: center; background: #f2f0d4; border-bottom: 1px solid #c4c2a0; box-sizing: border-box; }
  .vscroll button:last-child { border-top: 1px solid #c4c2a0; border-bottom: 0; }
  .vthumb { height: 13px; margin-top: 31px; border: 1px solid #c4c2a0; border-width: 1px 0; background: #ecebc6; display: grid; place-items: center; }
  .mark { width: 3px; height: 4px; border: 1px solid #b3b291; border-width: 1px 0 0 1px; }
  .hscroll { display: flex; border-top: 1px solid #b5b49c; background: #fafaf0; box-sizing: border-box; }
  .hscroll button { width: 20px; display: grid; place-items: center; background: #f2f0d4; border-right: 1px solid #c4c2a0; box-sizing: border-box; }
  .hscroll button:last-child { border-right: 0; border-left: 1px solid #c4c2a0; }
  .hthumb { flex: 1697; background: linear-gradient(#f6f5de, #e6e4bd 60%, #dad8b4); border-right: 1px solid #b5b49c; display: grid; place-items: center; }
  .htrack { flex: 90; }
  .corner { border-top: 1px solid #b5b49c; border-left: 1px solid #b5b49c; background: #fbfbf3; }
  .vscroll .tri, .hscroll .tri { border-top-color: #85846a; }
  .vscroll .tri.up { border: 4px solid transparent; border-bottom: 6px solid #85846a; border-top: 0; }
  .hscroll .tri.lt { border: 4px solid transparent; border-right: 5px solid #bdbba0; border-left: 0; }
  .hscroll .tri.rt { border: 4px solid transparent; border-left: 6px solid #85846a; border-right: 0; }

  .tabs { flex: none; display: flex; gap: 1px; height: 19px; background: #f0eedb; border-top: 1px solid #fbfbf3; }
  .tabs button { display: flex; align-items: center; gap: 1px; width: 167px; background: #aeaeae; color: #2e2a1c; text-align: left; overflow: hidden; }
  .tabs .on { background: #a9c9e4; gap: 0; }
</style>
